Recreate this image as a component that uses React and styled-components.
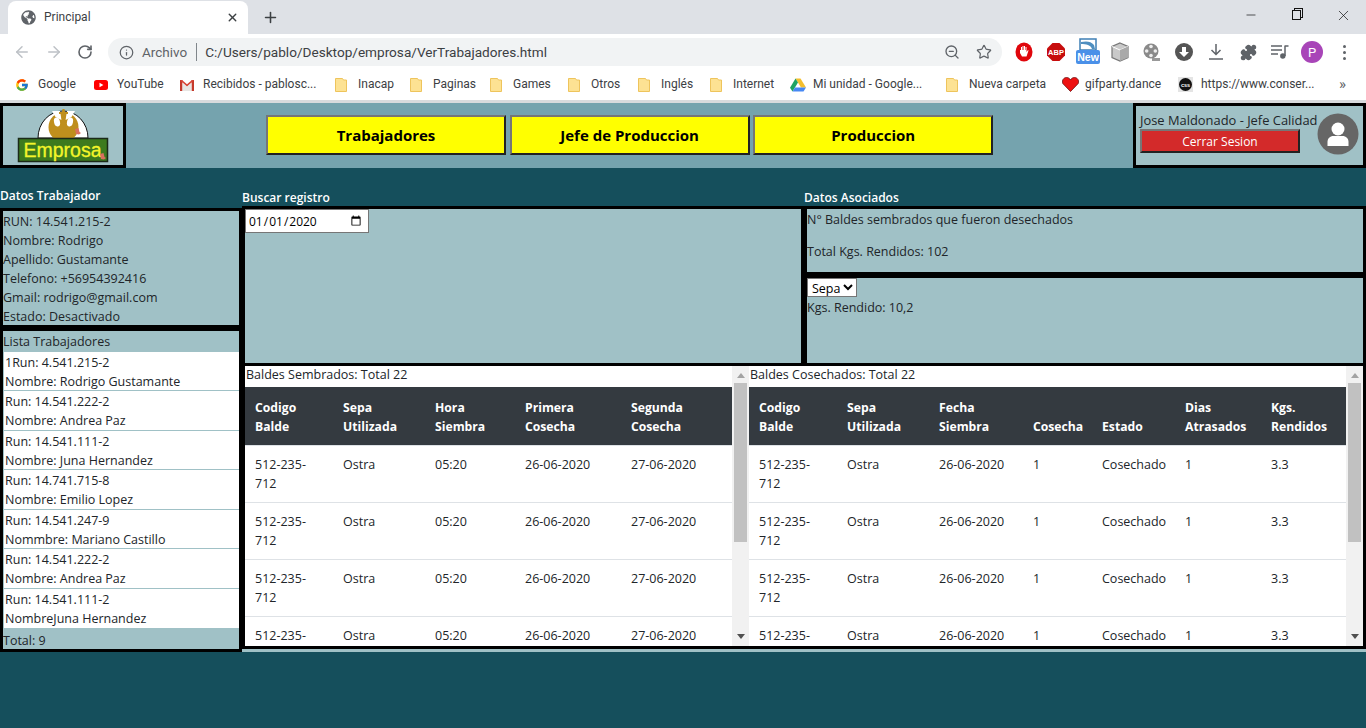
import React from 'react';
import styled, { createGlobalStyle } from 'styled-components';
import { ArrowLeft, ArrowRight, RotateCw, Info, ZoomOut, Star, Plus, X, Minus, Puzzle } from 'lucide-react';
import { FaGlobeAmericas } from 'react-icons/fa';
import { FcGoogle } from 'react-icons/fc';

const PAGE_FONT = '"Open Sans", "Noto Sans", sans-serif';

const GlobalStyle = createGlobalStyle`
    html, body {
        margin: 0;
        height: 100%;
        overflow: hidden;
    }
    * {
        box-sizing: border-box;
    }
`;

const workers = [
    ['1Run: 4.541.215-2', 'Nombre: Rodrigo Gustamante'],
    ['Run: 14.541.222-2', 'Nombre: Andrea Paz'],
    ['Run: 14.541.111-2', 'Nombre: Juna Hernandez'],
    ['Run: 14.741.715-8', 'Nombre: Emilio Lopez'],
    ['Run: 14.541.247-9', 'Nommbre: Mariano Castillo'],
    ['Run: 14.541.222-2', 'Nombre: Andrea Paz'],
    ['Run: 14.541.111-2', 'NombreJuna Hernandez']
];

const details = [
    'RUN: 14.541.215-2',
    'Nombre: Rodrigo',
    'Apellido: Gustamante',
    'Telefono: +56954392416',
    'Gmail: rodrigo@gmail.com',
    'Estado: Desactivado'
];

const sownTable = {
    widths: [88, 92, 90, 106, 111],
    head: [['Codigo', 'Balde'], ['Sepa', 'Utilizada'], ['Hora', 'Siembra'], ['Primera', 'Cosecha'], ['Segunda', 'Cosecha']],
    row: ['512-235-712', 'Ostra', '05:20', '26-06-2020', '27-06-2020']
};

const harvestTable = {
    widths: [88, 92, 94, 69, 83, 86, 85],
    head: [['Codigo', 'Balde'], ['Sepa', 'Utilizada'], ['Fecha', 'Siembra'], ['Cosecha'], ['Estado'], ['Dias', 'Atrasados'], ['Kgs.', 'Rendidos']],
    row: ['512-235-712', 'Ostra', '26-06-2020', '1', 'Cosechado', '1', '3.3']
};

const Folder = () => (
    <svg width="12" height="14" viewBox="0 0 12 14">
        <path d="M.5.5h7l1 1.5h3v11.5H.5z" fill="#fde293" stroke="#eec45c" />
    </svg>
);

const YouTubeIcon = () => (
    <svg width="14" height="14" viewBox="0 0 14 14">
        <rect y="2" width="14" height="10" rx="2.5" fill="#f00" />
        <path d="M5.5 4.8v4.4L9.4 7z" fill="#fff" />
    </svg>
);

const GmailIcon = () => (
    <svg width="14" height="12" viewBox="0 0 14 12">
        <path d="M0 1h2.5v11H0zM11.5 1H14v11h-2.5z" fill="#c5392b" />
        <path d="M0 1h2l5 4.2L12 1h2L7 8z" fill="#d8483a" />
        <path d="M2.5 3.8 7 7.6l4.5-3.8V12h-9z" fill="#e8e6e3" />
    </svg>
);

const DriveIcon = () => (
    <svg width="16" height="14" viewBox="0 0 16 14">
        <path d="M5.5.5h5L16 9.5h-5z" fill="#f5bf2e" />
        <path d="M5.5.5 0 9.7l2.5 3.8L8 4.5z" fill="#1ea362" />
        <path d="M5 9.5h11l-2.5 4h-11z" fill="#4688f4" />
    </svg>
);

const HeartIcon = () => (
    <svg width="17" height="15" viewBox="0 0 17 15">
        <path d="M8.5 14.5.8 6.5C-.5 3 2 .5 4.5.5c2 0 3.2 1 4 2.5.8-1.500 2-2.500 4-2.500 2.500 0 5 2.500 3.700 6z" fill="#ee1111" stroke="#6b0c0c" strokeWidth=".8" />
    </svg>
);

const CssIcon = () => (
    <svg width="15" height="15" viewBox="0 0 15 15">
        <rect width="15" height="15" fill="#e4e4e4" />
        <circle cx="7.5" cy="7.5" r="6.500" fill="#111" />
        <text x="7.5" y="9.500" textAnchor="middle" fontFamily="Liberation Sans, sans-serif" fontWeight="700" fontSize="5.500" fill="#fff">css</text>
    </svg>
);

const bookmarks = [
    { label: 'Google', width: 79, icon: <FcGoogle size={14} /> },
    { label: 'YouTube', width: 86, icon: <YouTubeIcon /> },
    { label: 'Recibidos - pablosc...', width: 155, icon: <GmailIcon /> },
    { label: 'Inacap', width: 75, icon: <Folder /> },
    { label: 'Paginas', width: 80, icon: <Folder /> },
    { label: 'Games', width: 78, icon: <Folder /> },
    { label: 'Otros', width: 70, icon: <Folder /> },
    { label: 'Inglés', width: 72, icon: <Folder /> },
    { label: 'Internet', width: 80, icon: <Folder /> },
    { label: 'Mi unidad - Google...', width: 156, icon: <DriveIcon /> },
    { label: 'Nueva carpeta', width: 116, icon: <Folder /> },
    { label: 'gifparty.dance', width: 116, icon: <HeartIcon /> },
    { label: 'https://www.conser...', width: 165, icon: <CssIcon /> }
];

const StopIcon = () => (
    <svg width="18" height="20" viewBox="0 0 18 20">
        <ellipse cx="9" cy="10" rx="8.500" ry="9.500" fill="#e0060c" />
        <path d="M5 8h1V5h1v3h.5V4h1v4H9V4h1v4h.5V5h1v5l1.500-2 .5.5-2 6H7L5 11z" fill="#fff" />
    </svg>
);

const AbpIcon = () => (
    <svg width="18" height="18" viewBox="0 0 18 18">
        <path d="M5.500 0h7L18 5.500v7L12.500 18h-7L0 12.500v-7z" fill="#c70d0d" />
        <text x="9" y="12" textAnchor="middle" fontFamily="Liberation Sans, sans-serif" fontWeight="700" fontSize="7.500" fill="#fff">ABP</text>
    </svg>
);

const NewIcon = () => (
    <svg width="24" height="28" viewBox="0 0 24 28">
        <rect x="4" y="1" width="16" height="11" fill="#fff" stroke="#3e7fb5" strokeWidth="1.500" />
        <path d="M5 4c5-1 10-1 13 3l1 4h-3c-1-4-6-5-11-5z" fill="#4f8fc0" />
        <rect y="12" width="24" height="14" rx="2" fill="#4a90e8" />
        <text x="12" y="23" textAnchor="middle" fontFamily="Liberation Sans, sans-serif" fontWeight="700" fontSize="10.500" fill="#fff">New</text>
    </svg>
);

const CubeIcon = () => (
    <svg width="18" height="20" viewBox="0 0 18 20">
        <path d="M9 1l8 3.500v11L9 19l-8-3.500v-11z" fill="#c9c9c9" stroke="#777" strokeWidth="1.200" />
        <path d="M1 4.500 9 8l8-3.500" fill="none" stroke="#fff" />
        <path d="M9 8v11l8-3.500v-11z" fill="#a9a9a9" />
    </svg>
);

const ReelIcon = () => (
    <svg width="18" height="20" viewBox="0 0 18 20">
        <circle cx="8" cy="9" r="7.500" fill="#8a8a8a" />
        <circle cx="8" cy="4.500" r="1.800" fill="#eee" />
        <circle cx="8" cy="13.500" r="1.800" fill="#eee" />
        <circle cx="3.700" cy="9" r="1.800" fill="#eee" />
        <circle cx="12.300" cy="9" r="1.800" fill="#eee" />
        <path d="M9 16h8v3H9z" fill="#999" />
    </svg>
);

const DownCircleIcon = () => (
    <svg width="18" height="18" viewBox="0 0 18 18">
        <circle cx="9" cy="9" r="9" fill="#555" />
        <path d="M7 4h4v5h3l-5 5-5-5h3z" fill="#fff" />
    </svg>
);

const DownloadIcon = () => (
    <svg width="16" height="18" viewBox="0 0 16 18">
        <path d="M8 1v10M3.500 7 8 11.500 12.500 7M1 16h14" fill="none" stroke="#5f6368" strokeWidth="1.500" />
    </svg>
);

const MusicQueueIcon = () => (
    <svg width="18" height="16" viewBox="0 0 18 16">
        <path d="M0 2h11M0 6h11M0 10h7" fill="none" stroke="#5f6368" strokeWidth="1.500" />
        <path d="M14 2h3.500M14 1.500V12" fill="none" stroke="#5f6368" strokeWidth="1.500" />
        <circle cx="11.800" cy="12" r="2.700" fill="#5f6368" />
    </svg>
);

const RebelLogo = () => (
    <svg width="120" height="59" viewBox="0 0 120 59">
        <path d="M35 32a25 27 0 0 1 50 0z" fill="#fff" stroke="#111" strokeWidth="1" />
        <circle cx="60.500" cy="21" r="15" fill="#bf8f1d" />
        <path d="M49 5h8l1.500 9-6-3zM72 5h-8l-1.500 9 6-3z" fill="#fff" />
        <ellipse cx="54" cy="16" rx="3" ry="4.500" transform="rotate(-12 54 16)" fill="#fff" />
        <ellipse cx="67" cy="16" rx="3" ry="4.500" transform="rotate(12 67 16)" fill="#fff" />
        <path d="M59.500 3h2l.5 3h3v2h-3l.5 14h-4l.5-14h-3V6h3z" fill="#bf8f1d" />
        <path d="M73 28l-1-5 3.500-1 1 4 1.500 1-2 1.500z" fill="#d9705e" />
        <rect x="15.500" y="32.500" width="89" height="23" fill="#3d7a1e" stroke="#1b2a18" strokeWidth="1.500" />
        <text x="20.500" y="51" fontFamily="Liberation Sans, sans-serif" fontSize="19.500" fill="#f4f52a" stroke="#f4f52a" strokeWidth=".3">Emprosa</text>
        <path d="M98 53l-1-5 3.500-1 1 4 1.500 1-2 1.500z" fill="#d9705e" />
    </svg>
);

const DataTable = ({ config }) => (
    <TableArea>
        <Grid>
            <colgroup>
                {config.widths.map((w, i) => <Col key={i} $w={w} />)}
            </colgroup>
            <thead>
                <tr>
                    {config.head.map((lines, i) => (
                        <HeadCell key={i}>
                            {lines.map(line => <HeadLine key={line}>{line}</HeadLine>)}
                        </HeadCell>
                    ))}
                </tr>
            </thead>
            <tbody>
                {[0, 1, 2, 3].map(r => (
                    <tr key={r}>
                        {config.row.map((value, i) => <BodyCell key={i}>{value}</BodyCell>)}
                    </tr>
                ))}
            </tbody>
        </Grid>
    </TableArea>
);

const ScrollBar = () => (
    <Track>
        <ArrowUp />
        <Thumb />
        <ArrowDown />
    </Track>
);

const App = () => {
    return (
        <Screen>
            <GlobalStyle />
            <TabStrip>
                <Tab>
                    <FaGlobeAmericas size={15} color="#5f6368" />
                    <TabTitle>Principal</TabTitle>
                    <X size={13} strokeWidth={2.5} color="#3c4043" />
                </Tab>
                <NewTab><Plus size={17} strokeWidth={2.200} color="#3c4043" /></NewTab>
                <WindowControls>
                    <Minus size={14} strokeWidth={1.200} color="#111" />
                    <RestoreGlyph />
                    <X size={17} strokeWidth={1} color="#111" />
                </WindowControls>
            </TabStrip>
            <Toolbar>
                <NavIcons>
                    <ArrowLeft size={18} color="#bdc1c6" />
                    <ArrowRight size={18} color="#bdc1c6" />
                    <RotateCw size={16} strokeWidth={2.400} color="#5f6368" />
                </NavIcons>
                <Omnibox>
                    <Info size={15} color="#5f6368" />
                    <Secure>Archivo</Secure>
                    <Divider />
                    <Url>C:/Users/pablo/Desktop/emprosa/VerTrabajadores.html</Url>
                    <OmniActions>
                        <ZoomOut size={16} color="#5f6368" />
                        <Star size={16} strokeWidth={1.800} color="#5f6368" />
                    </OmniActions>
                </Omnibox>
                <Extensions>
                    <ExtSlot><StopIcon /></ExtSlot>
                    <ExtSlot><AbpIcon /></ExtSlot>
                    <ExtSlot><NewIcon /></ExtSlot>
                    <ExtSlot><CubeIcon /></ExtSlot>
                    <ExtSlot><ReelIcon /></ExtSlot>
                    <ExtSlot><DownCircleIcon /></ExtSlot>
                    <ExtSlot><DownloadIcon /></ExtSlot>
                    <ExtSlot><Puzzle size={17} fill="#5f6368" color="#5f6368" /></ExtSlot>
                    <ExtSlot><MusicQueueIcon /></ExtSlot>
                    <ExtSlot><Profile>P</Profile></ExtSlot>
                    <ExtSlot><Dots><i /><i /><i /></Dots></ExtSlot>
                </Extensions>
            </Toolbar>
            <BookmarkBar>
                {bookmarks.map(b => (
                    <Bookmark key={b.label} $w={b.width}>
                        <BookmarkIcon>{b.icon}</BookmarkIcon>
                        {b.label}
                    </Bookmark>
                ))}
                <MoreBookmarks>»</MoreBookmarks>
            </BookmarkBar>

            <Header>
                <LogoBox><RebelLogo /></LogoBox>
                <Nav>
                    <NavButton>Trabajadores</NavButton>
                    <NavButton>Jefe de Produccion</NavButton>
                    <NavButton>Produccion</NavButton>
                </Nav>
                <UserBox>
                    <UserInfo>
                        <UserName>Jose Maldonado - Jefe Calidad</UserName>
                        <LogoutButton>Cerrar Sesion</LogoutButton>
                    </UserInfo>
                    <Avatar>
                        <svg width="42" height="42" viewBox="0 0 42 42">
                            <circle cx="21" cy="21" r="20.500" fill="#666" />
                            <circle cx="21" cy="16" r="6.500" fill="#fff" />
                            <path d="M10.500 33v-4c0-3.500 2.500-6 6-6h9c3.500 0 6 2.500 6 6v4z" fill="#fff" />
                        </svg>
                    </Avatar>
                </UserBox>
            </Header>

            <Workspace>
                <LeftColumn>
                    <LeftHeading>Datos Trabajador</LeftHeading>
                    <DetailBox>
                        {details.map(d => <div key={d}>{d}</div>)}
                    </DetailBox>
                    <ListBox>
                        <ListTitle>Lista Trabajadores</ListTitle>
                        <WorkerList>
                            {workers.map((w, i) => (
                                <Worker key={i}>
                                    <div>{w[0]}</div>
                                    <div>{w[1]}</div>
                                </Worker>
                            ))}
                        </WorkerList>
                        <ListTotal>Total: 9</ListTotal>
                    </ListBox>
                </LeftColumn>
                <RightColumn>
                    <TopHeadings>
                        <SectionHeading>Buscar registro</SectionHeading>
                        <SectionHeading>Datos Asociados</SectionHeading>
                    </TopHeadings>
                    <TopRow>
                        <SearchPanel>
                            <DateInput type="date" defaultValue="2020-01-01" />
                        </SearchPanel>
                        <Associated>
                            <SummaryPanel>
                                <div>N° Baldes sembrados que fueron desechados</div>
                                <SummaryTotal>Total Kgs. Rendidos: 102</SummaryTotal>
                            </SummaryPanel>
                            <YieldPanel>
                                <SepaSelect defaultValue="Sepa">
                                    <option>Sepa</option>
                                </SepaSelect>
                                <div>Kgs. Rendido: 10,2</div>
                            </YieldPanel>
                        </Associated>
                    </TopRow>
                    <TablesFrame>
                        <TablePane $w={504}>
                            <TableBody>
                                <Caption>Baldes Sembrados: Total 22</Caption>
                                <DataTable config={sownTable} />
                            </TableBody>
                            <ScrollBar />
                        </TablePane>
                        <TablePane $w={614}>
                            <TableBody>
                                <Caption>Baldes Cosechados: Total 22</Caption>
                                <DataTable config={harvestTable} />
                            </TableBody>
                            <ScrollBar />
                        </TablePane>
                    </TablesFrame>
                </RightColumn>
            </Workspace>
        </Screen>
    );
};

const Screen = styled.div`
    height: 728px;
    display: flex;
    flex-direction: column;
    background: #154f5c;
    font-family: ${PAGE_FONT};
    font-size: 12.5px;
    line-height: 19px;
    color: #212529;
    overflow: hidden;
`;

const TabStrip = styled.div`
    height: 34px;
    background: #dee1e6;
    display: flex;
    align-items: flex-end;
    padding-left: 8px;
    flex-shrink: 0;
`;

const Tab = styled.div`
    width: 240px;
    height: 33px;
    background: #fff;
    border-radius: 8px 8px 0 0;
    display: flex;
    align-items: center;
    padding: 0 9px 0 13px;
`;

const TabTitle = styled.span`
    flex: 1;
    margin-left: 8px;
    font-family: Roboto, sans-serif;
    font-size: 12px;
    color: #3c4043;
`;

const NewTab = styled.div`
    width: 44px;
    height: 33px;
    display: flex;
    align-items: center;
    justify-content: center;
`;

const WindowControls = styled.div`
    margin-left: auto;
    width: 136px;
    height: 34px;
    display: flex;
    align-items: center;
    justify-content: space-between;
    padding: 0 14px 4px 14px;
    align-self: flex-start;
`;

const RestoreGlyph = styled.div`
    width: 9px;
    height: 10px;
    border: 1px solid #111;
    box-shadow: 2px -2px 0 -1px #dee1e6, 2px -2px 0 0 #111;
`;

const Toolbar = styled.div`
    height: 32px;
    background: #fff;
    display: flex;
    align-items: flex-start;
    padding-top: 4px;
    flex-shrink: 0;
`;

const NavIcons = styled.div`
    width: 108px;
    height: 28px;
    display: flex;
    align-items: center;
    gap: 14px;
    padding-left: 13px;
`;

const Omnibox = styled.div`
    width: 894px;
    height: 28px;
    background: #f1f3f4;
    border-radius: 14px;
    display: flex;
    align-items: center;
    padding-left: 11px;
    font-family: Roboto, sans-serif;
`;

const Secure = styled.span`
    margin-left: 8px;
    color: #5f6368;
    font-size: 13.500px;
`;

const Divider = styled.div`
    width: 1px;
    height: 18px;
    background: #80868b;
    margin: 0 8px 0 9px;
`;

const Url = styled.span`
    color: #3c4043;
    font-size: 13.600px;
`;

const OmniActions = styled.div`
    margin-left: auto;
    display: flex;
    align-items: center;
    gap: 16px;
    padding-right: 10px;
`;

const Extensions = styled.div`
    display: flex;
    padding-left: 6px;
`;

const ExtSlot = styled.div`
    width: 32px;
    height: 28px;
    display: flex;
    align-items: center;
    justify-content: center;
`;

const Profile = styled.div`
    width: 22px;
    height: 22px;
    border-radius: 50%;
    background: #a845b8;
    color: #fff;
    font-family: Roboto, sans-serif;
    font-size: 13px;
    display: flex;
    align-items: center;
    justify-content: center;
`;

const Dots = styled.div`
    display: flex;
    flex-direction: column;
    gap: 3px;

    i {
        display: block;
        width: 3px;
        height: 3px;
        border-radius: 50%;
        background: #5f6368;
    }
`;

const BookmarkBar = styled.div`
    height: 37px;
    background: #fff;
    border-bottom: 3px solid #d8dadd;
    display: flex;
    align-items: center;
    padding: 3px 0 0 15px;
    flex-shrink: 0;
`;

const Bookmark = styled.div`
    width: ${p => p.$w}px;
    display: flex;
    align-items: center;
    font-family: Roboto, sans-serif;
    font-size: 12px;
    color: #3c4043;
    white-space: nowrap;
`;

const BookmarkIcon = styled.span`
    width: 23px;
    display: flex;
    align-items: center;
`;

const MoreBookmarks = styled.span`
    font-family: Roboto, sans-serif;
    font-size: 15px;
    color: #5f6368;
    margin-left: -4px;
`;

const Header = styled.header`
    height: 65px;
    background: #75a3ae;
    display: flex;
    flex-shrink: 0;
`;

const LogoBox = styled.div`
    width: 126px;
    border: 3px solid #000;
    background: #a0c1c6;
`;

const Nav = styled.nav`
    display: flex;
    gap: 3.600px;
    margin-left: 140px;
    padding-top: 12px;
`;

const NavButton = styled.button`
    width: 240px;
    height: 40px;
    background: #ff0;
    border: 2px solid;
    border-color: #767676 #222 #222 #767676;
    font-family: ${PAGE_FONT};
    font-size: 15px;
    font-weight: 700;
    color: #000;
    padding: 0;
`;

const UserBox = styled.div`
    margin-left: auto;
    width: 233px;
    border: 3px solid #000;
    background: #a0c1c6;
    display: flex;
    padding-left: 4px;
`;

const UserInfo = styled.div`
    width: 177px;
    padding-top: 5px;
`;

const UserName = styled.div`
    white-space: nowrap;
    height: 18px;
    font-size: 12.900px;
`;

const LogoutButton = styled.button`
    display: block;
    width: 160px;
    height: 24px;
    background: #d32a2a;
    border: 2px solid;
    border-color: #767676 #222 #222 #767676;
    color: #fff;
    font-family: ${PAGE_FONT};
    font-size: 12px;
    padding: 0;
`;

const Avatar = styled.div`
    margin-top: 7px;
    line-height: 0;
`;

const Workspace = styled.main`
    display: grid;
    grid-template-columns: 242px 1fr;
    align-items: start;
`;

const LeftColumn = styled.section`
    padding-top: 18px;
`;

const LeftHeading = styled.h2`
    margin: 0;
    height: 22px;
    font-size: 12px;
    line-height: 19px;
    font-weight: 600;
    color: #fff;
`;

const DetailBox = styled.div`
    height: 120px;
    border: 3px solid #000;
    background: #a0c1c6;
    padding-top: 1px;
`;

const ListBox = styled.div`
    height: 324px;
    border: 3px solid #000;
    background: #a0c1c6;
    display: flex;
    flex-direction: column;
`;

const ListTitle = styled.div`
    height: 21px;
    line-height: 22px;
`;

const WorkerList = styled.div`
    margin-left: 1px;
    background: #fff;
`;

const Worker = styled.div`
    padding: 1px 0 0 1px;
    height: 39.430px;
    border-bottom: 1.430px solid #a0c1c6;

    &:last-child {
        border-bottom: 0;
    }
`;

const ListTotal = styled.div`
    margin-top: auto;
    height: 19px;
    line-height: 21px;
`;

const RightColumn = styled.section`
    padding-top: 20px;
`;

const TopHeadings = styled.div`
    display: grid;
    grid-template-columns: 562px 562px;
`;

const SectionHeading = styled.h2`
    margin: 0;
    height: 18px;
    font-size: 12px;
    line-height: 19px;
    font-weight: 600;
    color: #fff;
`;

const TopRow = styled.div`
    display: grid;
    grid-template-columns: 562px 562px;
    height: 160px;
`;

const SearchPanel = styled.div`
    border: 3px solid #000;
    background: #a0c1c6;
`;

const DateInput = styled.input`
    display: block;
    width: 124px;
    height: 24px;
    margin: 0;
    padding: 0 4px 0 2px;
    border: 1px solid #767676;
    background: #fff;
    font-family: ${PAGE_FONT};
    font-size: 12px;
    color: #000;
`;

const Associated = styled.div`
    display: flex;
    flex-direction: column;
`;

const SummaryPanel = styled.div`
    height: 69px;
    border: 3px solid #000;
    background: #a0c1c6;
    padding-top: 1px;
`;

const SummaryTotal = styled.div`
    margin-top: 13px;
`;

const YieldPanel = styled.div`
    height: 91px;
    border: 3px solid #000;
    background: #a0c1c6;
`;

const SepaSelect = styled.select`
    display: block;
    width: 50px;
    height: 19px;
    margin: 0 0 1px;
    padding: 0;
    font-family: ${PAGE_FONT};
    font-size: 12.500px;
    background: #fff;
    color: #000;
`;

const TablesFrame = styled.div`
    height: 283px;
    display: flex;
    background: #fff;
    border: 3px solid #000;
    border-top: 0;
    box-shadow: 0 3px 0 #a0c1c6;
`;

const TablePane = styled.div`
    width: ${p => p.$w}px;
    display: flex;
    flex-shrink: 0;
`;

const TableBody = styled.div`
    flex: 1;
    min-width: 0;
    display: flex;
    flex-direction: column;
`;

const Caption = styled.div`
    height: 21px;
    padding-left: 1px;
    line-height: 18px;
    white-space: nowrap;
`;

const TableArea = styled.div`
    flex: 1;
    overflow: hidden;
`;

const Grid = styled.table`
    width: 100%;
    table-layout: fixed;
    border-collapse: collapse;
`;

const Col = styled.col`
    width: ${p => p.$w}px;
`;

const HeadCell = styled.th`
    background: #343a40;
    color: #fff;
    height: 58px;
    padding: 0 10px 9px;
    text-align: left;
    vertical-align: bottom;
    font-weight: 700;
    font-size: 12.200px;
`;

const HeadLine = styled.div`
    line-height: 19px;
`;

const BodyCell = styled.td`
    height: 57px;
    padding: 9px 10px;
    border-top: 1px solid #dee2e6;
    vertical-align: top;
    line-height: 19px;
`;

const Track = styled.div`
    width: 17px;
    flex-shrink: 0;
    background: #f1f1f1;
    display: flex;
    flex-direction: column;
    align-items: center;
`;

const ArrowUp = styled.div`
    flex-shrink: 0;
    width: 0;
    height: 0;
    margin: 7px 0 5px;
    border-left: 4px solid transparent;
    border-right: 4px solid transparent;
    border-bottom: 5px solid #a3a3a3;
`;

const Thumb = styled.div`
    width: 13px;
    height: 159px;
    background: #c1c1c1;
`;

const ArrowDown = styled.div`
    margin-top: auto;
    margin-bottom: 7px;
    width: 0;
    height: 0;
    border-left: 4px solid transparent;
    border-right: 4px solid transparent;
    border-top: 5px solid #505050;
`;

export default App;
